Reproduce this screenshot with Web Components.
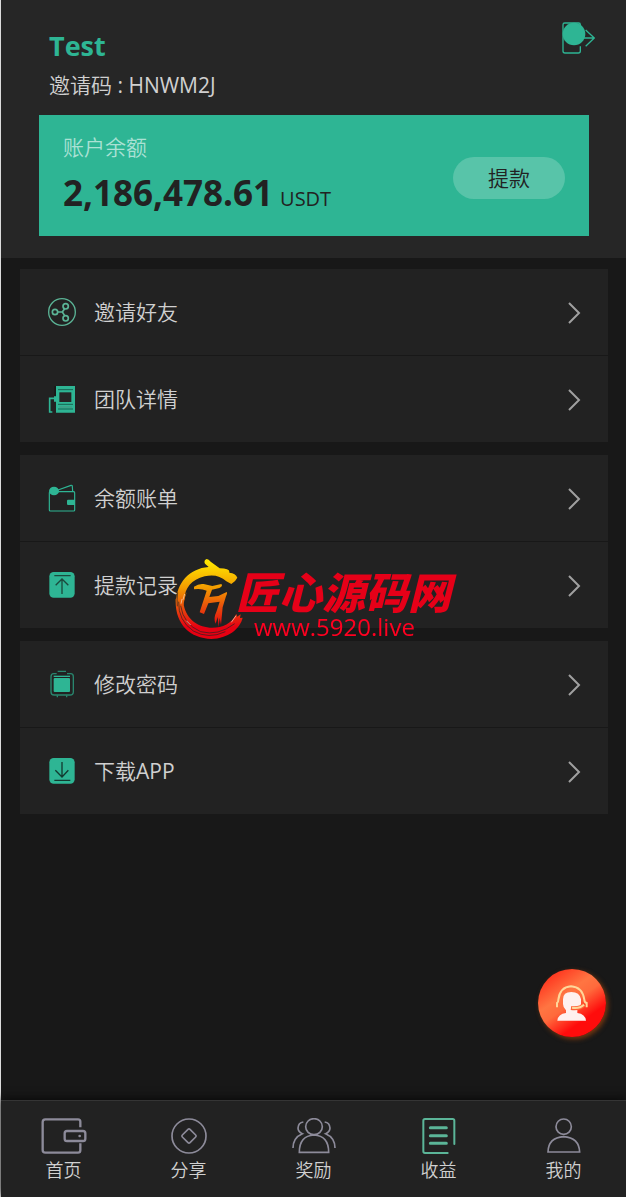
<!DOCTYPE html>
<html lang="zh-CN">
<head>
<meta charset="utf-8">
<meta name="viewport" content="width=device-width, initial-scale=1">
<title>收益</title>
<style>
  body {
    margin: 0;
    background: #181818;
    color: #d0d0d0;
    font-family: "Open Sans", "Noto Sans CJK SC DemiLight", "Noto Sans CJK SC", sans-serif;
    font-size: 21px;
    line-height: 30px;
  }
</style>
</head>
<body>
<account-page>
  <account-header slot="header" name="Test" code="HNWM2J">
    <balance-card label="账户余额" amount="2,186,478.61" unit="USDT">提款</balance-card>
  </account-header>

  <menu-group>
    <menu-item icon="share">邀请好友</menu-item>
    <menu-item icon="team">团队详情</menu-item>
  </menu-group>
  <menu-group>
    <menu-item icon="wallet">余额账单</menu-item>
    <menu-item icon="upload">提款记录</menu-item>
  </menu-group>
  <menu-group>
    <menu-item icon="case">修改密码</menu-item>
    <menu-item icon="download">下载APP</menu-item>
  </menu-group>

  <tab-bar slot="footer">
    <tab-link icon="home">首页</tab-link>
    <tab-link icon="coin">分享</tab-link>
    <tab-link icon="people">奖励</tab-link>
    <tab-link icon="bill" active>收益</tab-link>
    <tab-link icon="user">我的</tab-link>
  </tab-bar>
</account-page>
<site-mark title="匠心源码网" url="www.5920.live"></site-mark>
<support-button></support-button>

<script>
// name: [width, height, viewBox, markup]
const ICONS = {
  logout: [33, 32, "427 67 99 96", `
    <g fill="none" stroke="currentColor" stroke-width="4">
      <path d="M482 88V75q0-5-5-5H435q-5 0-5 5v79q0 6 6 6h40q6 0 6-6V140"/>
      <path d="M480 115h43M498 91l26 24-26 25"/>
    </g>
    <circle cx="463" cy="103" r="34" fill="currentColor"/>`],
  share: [28, 28, "0 0 84 84", `
    <g fill="none" stroke="#5bb496" stroke-width="5">
      <circle cx="42" cy="42" r="40" stroke-width="4"/>
      <circle cx="21" cy="42" r="8"/><circle cx="53" cy="25" r="8"/><circle cx="53" cy="61" r="8"/>
      <path d="M29 42h14l7-10M43 42l7 11"/>
    </g>`],
  team: [28, 28, "0 0 84 84", `
    <path fill="#181818" d="M19 3h6v31h-6z"/>
    <path fill="currentColor" d="M24 3h57v80H24zM18 34h8v16h-8z"/>
    <path fill="#252525" d="M34 22h36v29H34z"/>
    <path stroke="#176552" stroke-width="3" d="M30 14h45M30 58h45M30 72h45"/>
    <path stroke="#4d8f7e" stroke-width="3" d="M34 66h38"/>
    <path fill="none" stroke="currentColor" stroke-width="5" d="M20 40H5v41h8"/>`],
  wallet: [28, 28, "0 0 84 84", `
    <g fill="none" stroke="currentColor" stroke-width="3.5">
      <rect x="4" y="23" width="76" height="58" rx="3"/>
      <path d="M30 18L69 4q4-1 4 4l1 14"/>
    </g>
    <path fill="currentColor" d="M60 47h21v16H60q-3 0-3-4v-8q0-4 3-4z"/>
    <ellipse cx="18" cy="21" rx="15" ry="13" fill="currentColor"/>`],
  upload: [28, 28, "0 0 84 84", `
    <rect x="4" y="3" width="76" height="77" rx="13" fill="currentColor"/>
    <path fill="none" stroke="#1b4a3d" stroke-width="4" d="M19 14h49M42 69V24M23 43l19-19 19 19"/>`],
  case: [28, 28, "0 0 84 84", `
    <g fill="none" stroke="#29866e" stroke-width="4">
      <path d="M26 11H17q-8 0-8 9v46q0 9 9 9h48q10 0 10-9V20q0-9-8-9H57"/>
      <path d="M29 4h25M28 76v6M56 76v6"/>
    </g>
    <path stroke="currentColor" stroke-width="4" d="M17 19h49"/>
    <rect x="17" y="24" width="49" height="42" rx="3" fill="currentColor"/>`],
  download: [28, 28, "0 0 84 84", `
    <rect x="4" y="3" width="76" height="77" rx="13" fill="currentColor"/>
    <path fill="none" stroke="#123a30" stroke-width="4" d="M42 15v45M22 40l20 20 19-20M19 70h48"/>`],
  chevron: [14, 24, "0 0 14 24", `
    <path fill="none" stroke="currentColor" stroke-width="2" d="M2 3l10 10L2 23"/>`],
  home: [46, 36, "122 84 138 108", `
    <g fill="none" stroke="currentColor" stroke-width="7">
      <path d="M240 112V95q0-7-7-7H135q-8 0-8 8v84q0 8 8 8h98q7 0 7-7V160"/>
      <rect x="193" y="123" width="62" height="30" rx="7"/>
    </g>
    <circle cx="238" cy="138" r="4" fill="currentColor"/>`],
  coin: [36, 36, "513 84 108 108", `
    <g fill="none" stroke="currentColor" stroke-width="5">
      <circle cx="567" cy="138" r="51"/>
      <path d="M564 118q3-3 6 0l17 17q3 3 0 6l-17 17q-3 3-6 0l-17-17q-3-3 0-6z"/>
    </g>`],
  people: [44, 36, "875 84 132 108", `
    <g fill="none" stroke="currentColor" stroke-width="5">
      <ellipse cx="941" cy="110" rx="25" ry="24"/>
      <path d="M897 187q0-50 44-52q44 2 44 52z"/>
      <path d="M909 96q-15 2-16 18q0 11 13 17q-28 12-28 43"/>
      <path d="M973 96q15 2 16 18q0 11-13 17q28 12 28 43"/>
    </g>`],
  bill: [34, 36, "308 84 102 108", `
    <g fill="none" stroke="#5bb598" stroke-linecap="round">
      <path stroke-width="6" d="M405 162V92q0-5-5-5H317q-5 0-5 5v92q0 5 5 5h68"/>
      <path stroke-width="9" d="M333 113h48M333 137h48M333 160h48"/>
    </g>`],
  user: [34, 36, "683 84 102 108", `
    <g fill="none" stroke="currentColor" stroke-width="5">
      <circle cx="733" cy="110" r="23"/>
      <path d="M686 186q1-43 47-46q46 3 48 46z"/>
    </g>`],
  agent: [34, 36, "105 103 102 108", `
    <path fill="#fff1ee" d="M129 146q0-22 25-22t29 22v14q-2 13-11 19v8q24 3 26 23H112q2-20 26-23v-8q-9-8-9-19z"/>
    <path fill="none" stroke="#ffd79a" stroke-width="6" d="M111 170v-13q4-2 4-10q5-38 38-40q34 2 40 40q0 8 7 10v13"/>
    <path fill="none" stroke="#ff6236" stroke-width="12" d="M153 172q26 4 40-10"/>
    <path fill="none" stroke="#ffd79a" stroke-width="6" d="M156 171q22 4 36-9"/>`],
  emblem: [70, 80, "21 30 210 240", `
    <defs>
      <linearGradient id="fire" gradientUnits="userSpaceOnUse" x1="0" y1="40" x2="0" y2="235">
        <stop offset="0" stop-color="#ffe500"/>
        <stop offset=".4" stop-color="#f39a00"/>
        <stop offset=".7" stop-color="#e84a0c"/>
        <stop offset="1" stop-color="#e60012"/>
      </linearGradient>
    </defs>
    <path fill="url(#fire)" d="M25 168C20 110 60 58 122 54L111 44Q106 34 116 30Q122 30 128 38L155 58Q187 58 184 71Q203 73 208 86Q202 98 190 105L175 97Q148 72 110 82C70 92 50 118 50 150L46 168Z"/>
    <path fill="url(#fire)" d="M23 150C20 225 65 268 130 270C180 268 216 240 224 206L216 207L218 196L207 203L205 194C190 226 160 238 125 236C85 233 52 208 46 160L56 130L44 150L42 128Z"/>
    <path fill="none" stroke="#222" stroke-width="2" d="M32 158Q30 215 76 246Q122 272 172 248M38 170Q46 226 98 248Q150 262 200 224M29 130Q26 150 28 172"/>
    <path fill="none" stroke="#ffe1c8" stroke-width="2" d="M42 150l-3 14M50 135l-5 17M55 215l13 13M190 220l14-20"/>
    <path fill="url(#fire)" d="M78 113q14-10 29-8l26 6 27-6q6 6-6 12l-22 5-8 22 27-3 25-12q3 2-2 13l-10 33-5 52-4-20-3 27-3-30-6 20q-8-15 3-38l9-28-34 5-13 32-13-5 4-13 17-52q-16-7-38-4z"/>`],
};

// Attaches an open shadow root holding the given styles and markup
class BaseElement extends HTMLElement {
  connectedCallback() {
    if (this.shadowRoot) return;
    this.attachShadow({ mode: "open" });
    this.shadowRoot.innerHTML = this.template();
  }
}

class AppIcon extends BaseElement {
  template() {
    const [width, height, viewBox, markup] = ICONS[this.getAttribute("name")];
    return `
      <style>
        :host { display: block; flex: none; }
        svg { display: block; }
      </style>
      <svg width="${width}" height="${height}" viewBox="${viewBox}" aria-hidden="true">${markup}</svg>
    `;
  }
}

class AccountPage extends BaseElement {
  template() {
    return `
      <style>
        :host {
          display: flex;
          flex-direction: column;
          min-height: 100vh;
          box-sizing: border-box;
          border-left: 1px solid #dcdcdc;
        }
        main {
          flex: 1;
          display: flex;
          flex-direction: column;
          gap: 13px;
          padding: 11px 18px 24px 19px;
        }
      </style>
      <slot name="header"></slot>
      <main><slot></slot></main>
      <slot name="footer"></slot>
    `;
  }
}

class AccountHeader extends BaseElement {
  template() {
    return `
      <style>
        :host { display: block; background: #262626; padding-bottom: 22px; }
        .profile {
          display: flex;
          justify-content: space-between;
          align-items: flex-start;
          padding: 22px 31px 15px 48px;
        }
        h1 {
          margin: 0;
          padding: 4px 0;
          font-size: 27px;
          line-height: 40px;
          color: #2eb594;
        }
        p { margin: 0; }
        button {
          padding: 0;
          border: 0;
          background: none;
          color: #2eb594;
          cursor: pointer;
        }
        .card { padding: 0 37px 0 38px; }
      </style>
      <div class="profile">
        <div>
          <h1>${this.getAttribute("name")}</h1>
          <p>邀请码 : ${this.getAttribute("code")}</p>
        </div>
        <button type="button" aria-label="退出登录"><app-icon name="logout"></app-icon></button>
      </div>
      <div class="card"><slot></slot></div>
    `;
  }
}

class BalanceCard extends BaseElement {
  template() {
    return `
      <style>
        :host {
          display: flex;
          align-items: center;
          justify-content: space-between;
          padding: 17px 24px 12px;
          background: #2eb594;
          color: #222;
        }
        .label { color: #abe1d4; }
        .amount {
          display: flex;
          align-items: baseline;
          gap: 7px;
          white-space: nowrap;
        }
        strong { font-size: 35px; line-height: 62px; }
        .unit { font-size: 20px; }
        button {
          padding: 0 35px;
          border: 0;
          border-radius: 21px;
          background: #58c4a9;
          color: inherit;
          font: inherit;
          line-height: 42px;
          white-space: nowrap;
          cursor: pointer;
        }
      </style>
      <div>
        <div class="label">${this.getAttribute("label")}</div>
        <div class="amount">
          <strong>${this.getAttribute("amount")}</strong>
          <span class="unit">${this.getAttribute("unit")}</span>
        </div>
      </div>
      <button type="button"><slot></slot></button>
    `;
  }
}

class MenuGroup extends BaseElement {
  template() {
    return `
      <style>
        :host { display: flex; flex-direction: column; gap: 1px; }
      </style>
      <slot></slot>
    `;
  }
}

class MenuItem extends BaseElement {
  template() {
    return `
      <style>
        :host { display: block; background: #222; }
        a {
          display: flex;
          align-items: center;
          gap: 18px;
          padding: 28px 27px 28px 28px;
          color: inherit;
          text-decoration: none;
        }
        .icon { color: #2eb594; }
        .text { flex: 1; }
        .arrow { color: #a0a0a0; }
      </style>
      <a href="#">
        <app-icon class="icon" name="${this.getAttribute("icon")}"></app-icon>
        <span class="text"><slot></slot></span>
        <app-icon class="arrow" name="chevron"></app-icon>
      </a>
    `;
  }
}

class TabBar extends BaseElement {
  template() {
    return `
      <style>
        :host {
          display: block;
          position: sticky;
          bottom: 0;
          border-top: 1px solid #353535;
          background: #222;
          box-shadow: 0 -2px 8px #0a0a0a;
        }
        nav { display: flex; }
      </style>
      <nav><slot></slot></nav>
    `;
  }
}

class TabLink extends BaseElement {
  template() {
    return `
      <style>
        :host { display: block; flex: 1; font-size: 18px; line-height: 26px; }
        a {
          display: flex;
          flex-direction: column;
          align-items: center;
          gap: 3px;
          padding: 17px 0 14px;
          color: inherit;
          text-decoration: none;
        }
        app-icon { color: #8d8b9a; }
      </style>
      <a href="#" ${this.hasAttribute("active") ? 'aria-current="page"' : ""}>
        <app-icon name="${this.getAttribute("icon")}"></app-icon>
        <span><slot></slot></span>
      </a>
    `;
  }
}

// Floating logo over the middle of the window
class SiteMark extends BaseElement {
  template() {
    return `
      <style>
        :host {
          position: fixed;
          inset: 0;
          display: flex;
          align-items: center;
          justify-content: center;
          pointer-events: none;
          color: #e60018;
        }
        .words {
          display: flex;
          flex-direction: column;
          padding-top: 6px;
          margin-left: -9px;
          white-space: nowrap;
        }
        .title {
          font-family: "Noto Sans CJK SC", sans-serif;
          font-size: 43px;
          font-weight: 900;
          font-style: italic;
          line-height: 50px;
        }
        .url {
          padding-left: 18px;
          font-size: 24px;
          line-height: 24px;
          color: #ff0020;
        }
      </style>
      <app-icon name="emblem"></app-icon>
      <div class="words">
        <span class="title">${this.getAttribute("title")}</span>
        <span class="url">${this.getAttribute("url")}</span>
      </div>
    `;
  }
}

class SupportButton extends BaseElement {
  template() {
    return `
      <style>
        :host { position: fixed; right: 20px; bottom: 160px; }
        button {
          display: grid;
          place-items: center;
          width: 68px;
          height: 68px;
          padding: 0;
          border: 0;
          border-radius: 50%;
          background: linear-gradient(145deg, #ff2a18 8%, #ff7542 38%, #ff6a3c 50%, #ff0c0c 72%);
          box-shadow: 2px 2px 5px #7a3a10;
          cursor: pointer;
        }
      </style>
      <button type="button" aria-label="在线客服"><app-icon name="agent"></app-icon></button>
    `;
  }
}

customElements.define("app-icon", AppIcon);
customElements.define("account-page", AccountPage);
customElements.define("account-header", AccountHeader);
customElements.define("balance-card", BalanceCard);
customElements.define("menu-group", MenuGroup);
customElements.define("menu-item", MenuItem);
customElements.define("tab-bar", TabBar);
customElements.define("tab-link", TabLink);
customElements.define("site-mark", SiteMark);
customElements.define("support-button", SupportButton);
</script>
</body>
</html>
